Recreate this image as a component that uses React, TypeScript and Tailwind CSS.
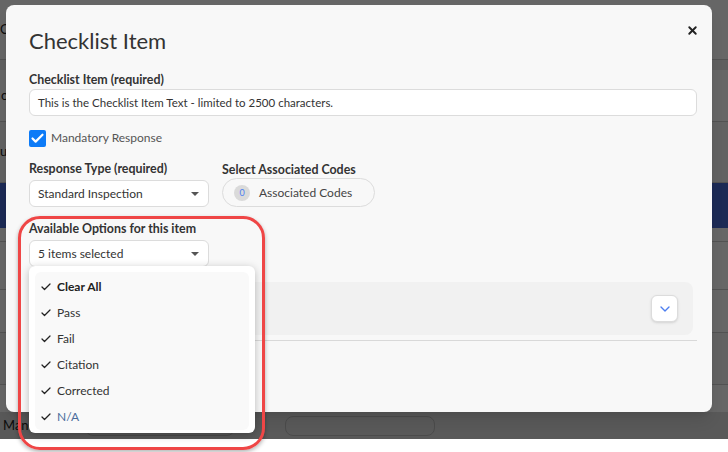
import { Check, ChevronDown, X } from "lucide-react";

const options = ["Clear All", "Pass", "Fail", "Citation", "Corrected", "N/A"];

function Caret() {
  return (
    <svg width="8" height="4" viewBox="0 0 8 4" className="fill-[#555]">
      <path d="M0 0h8L4 4z" />
    </svg>
  );
}

function SelectBox({ value }: { value: string }) {
  return (
    <div className="flex h-[27px] w-[180px] items-center justify-between rounded-[6px] border border-[#dcdcdc] bg-white pl-[8px] pr-[9px] text-[12px] text-[#333]">
      <span>{value}</span>
      <Caret />
    </div>
  );
}

function BackgroundPage() {
  return (
    <div className="flex h-[439px] flex-col bg-white text-[13px] text-[#222]">
      <div className="flex h-[60px] items-center border-b border-[#ccc]">C</div>
      <div className="h-[10px] bg-[#eee]" />
      <div className="flex h-[52px] items-center border-b border-[#ccc] pl-[1px]">o</div>
      <div className="flex h-[61px] items-center border-b border-[#ccc] bg-[#f5f5f5]">u</div>
      <div className="h-[45px] bg-[#4669d4]" />
      <div className="h-[14px] border-b border-[#ccc]" />
      <div className="h-[48px] border-b border-[#ccc]" />
      <div className="flex h-[43px] items-end border-b border-[#ccc] pb-[4px] pl-[8px]">N</div>
      <div className="h-[52px] border-b border-[#ccc] bg-[#f5f5f5]" />
      <div className="h-[27px]" />
      <div className="flex h-[27px] items-center gap-[50px] bg-[#dedede] pl-[3px]">
        <span>Manc</span>
        <span className="h-[20px] w-[150px] rounded-[8px] border border-[#bbb]" />
        <span className="h-[20px] w-[150px] rounded-[8px] border border-[#bbb]" />
      </div>
    </div>
  );
}

export default function App() {
  return (
    <div
      className="relative h-[452px] w-[728px] overflow-hidden bg-white"
      style={{ fontFamily: "Lato, 'Open Sans', sans-serif" }}
    >
      <BackgroundPage />
      <div className="absolute inset-x-0 top-0 h-[439px] bg-black/60" />

      <div className="absolute left-[6px] top-[5px] h-[407px] w-[706px] rounded-[8px] bg-[#f8f8f8] pl-[23px] pr-[15px] pt-[23px] shadow-lg">
        <button className="absolute right-[13px] top-[19px] text-[#222]">
          <X size={13} strokeWidth={3.5} />
        </button>
        <h2 className="text-[22px] leading-[26px] font-normal text-[#333]">Checklist Item</h2>

        <div className="mt-[18px] text-[12.4px] leading-[16px] font-bold text-[#333]">
          Checklist Item (required)
        </div>
        <div className="mt-[1px] flex h-[27px] items-center rounded-[6px] border border-[#dcdcdc] bg-white px-[8px] text-[11.5px] text-[#333]">
          This is the Checklist Item Text - limited to 2500 characters.
        </div>

        <label className="mt-[13px] flex items-center gap-[5px] text-[12px] text-[#555]">
          <span className="flex h-[17px] w-[17px] items-center justify-center rounded-[2px] bg-[#0d7bf7] text-white">
            <Check size={15} strokeWidth={3.5} />
          </span>
          Mandatory Response
        </label>

        <div className="mt-[14px] flex gap-[13px]">
          <div>
            <div className="text-[12.4px] leading-[16px] font-bold text-[#333]">Response Type (required)</div>
            <div className="mt-[3px]">
              <SelectBox value="Standard Inspection" />
            </div>
          </div>
          <div>
            <div className="pt-[1px] text-[12.4px] leading-[16px] font-bold text-[#333]">Select Associated Codes</div>
            <div className="flex h-[29px] w-[153px] items-center gap-[9px] rounded-full border border-[#dcdcdc] pl-[11px] text-[12px] text-[#444]">
              <span className="flex h-[16px] w-[16px] items-center justify-center rounded-full bg-[#dadada] text-[9px] text-[#4d7ef0]">
                0
              </span>
              Associated Codes
            </div>
          </div>
        </div>

        <div className="mt-[14px] text-[12.4px] leading-[16px] font-bold text-[#333]">
          Available Options for this item
        </div>
        <div className="relative mt-[3px]">
          <SelectBox value="5 items selected" />
        </div>

        <div className="mt-[15px] flex h-[53px] w-[664px] items-center justify-end rounded-[8px] bg-[#f1f1f1] pr-[15px]">
          <button className="flex h-[27px] w-[27px] items-center justify-center rounded-[6px] border border-[#dcdcdc] bg-white text-[#4d7ef0] shadow-sm">
            <ChevronDown size={16} strokeWidth={2} />
          </button>
        </div>
        <div className="mt-[5px] h-px w-[668px] bg-[#d9d9d9]" />
      </div>

      <div className="absolute left-[29px] top-[266px] h-[167px] w-[226px] rounded-[6px] bg-white p-[6px] shadow-[0_2px_8px_rgba(0,0,0,0.25)]">
        <ul className="rounded-[6px] bg-[#f9f9f9] pt-[2px]">
          {options.map((o, i) => (
            <li
              key={o}
              className={`flex h-[26px] items-center gap-[5px] pl-[5px] text-[12px] ${
                i === 0 ? "font-bold text-[#222]" : o === "N/A" ? "text-[#4a6d9c]" : "text-[#333]"
              }`}
            >
              <Check size={12} strokeWidth={2.5} className="text-[#222]" />
              {o}
            </li>
          ))}
        </ul>
      </div>

      <div className="pointer-events-none absolute left-[18px] top-[216px] h-[234px] w-[247px] rounded-[22px] border-[3px] border-[#ef4646] shadow-[0_2px_4px_rgba(0,0,0,0.3)]" />
    </div>
  );
}
